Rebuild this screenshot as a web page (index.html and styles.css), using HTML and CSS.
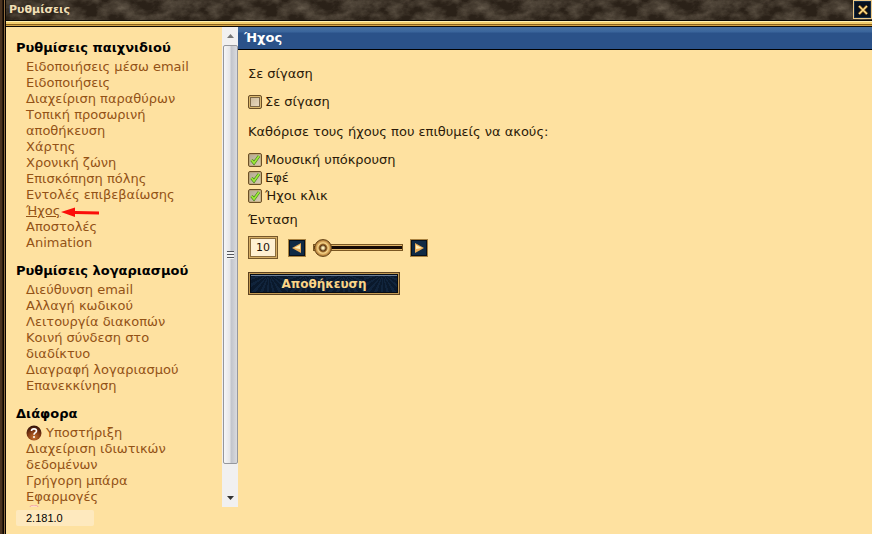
FILE: index.html
```html
<!DOCTYPE html>
<html lang="el">
<head>
<meta charset="utf-8">
<title>Ρυθμίσεις</title>
<link rel="stylesheet" href="styles.css">
</head>
<body>
<div class="window">
  <header class="titlebar">
    <h1>Ρυθμίσεις</h1>
    <button class="close" type="button" aria-label="Κλείσιμο">
      <svg viewBox="0 0 10 10" width="10" height="10"><path d="M1 1 9 9M9 1 1 9" stroke="#7a4a12" stroke-width="3"/><path d="M1 1 9 9M9 1 1 9" stroke="#ffe08a" stroke-width="1.6"/></svg>
    </button>
  </header>
  <div class="content">
    <aside class="sidebar">
      <div class="scroller">
        <nav class="menu">
          <h2>Ρυθμίσεις παιχνιδιού</h2>
          <ul>
            <li><a href="#">Ειδοποιήσεις μέσω email</a></li>
            <li><a href="#">Ειδοποιήσεις</a></li>
            <li><a href="#">Διαχείριση παραθύρων</a></li>
            <li><a href="#">Τοπική προσωρινή αποθήκευση</a></li>
            <li><a href="#">Χάρτης</a></li>
            <li><a href="#">Χρονική ζώνη</a></li>
            <li><a href="#">Επισκόπηση πόλης</a></li>
            <li><a href="#">Εντολές επιβεβαίωσης</a></li>
            <li class="current"><a href="#">Ήχος</a><svg class="pointer" viewBox="0 0 40 12" width="40" height="12"><path d="M1 6 15 1.500V5L39 5.500V8.500L15 8V11Z" fill="#fb0d0a"/></svg></li>
            <li><a href="#">Αποστολές</a></li>
            <li><a href="#">Animation</a></li>
          </ul>
          <h2>Ρυθμίσεις λογαριασμού</h2>
          <ul>
            <li><a href="#">Διεύθυνση email</a></li>
            <li><a href="#">Αλλαγή κωδικού</a></li>
            <li><a href="#">Λειτουργία διακοπών</a></li>
            <li><a href="#">Κοινή σύνδεση στο διαδίκτυο</a></li>
            <li><a href="#">Διαγραφή λογαριασμού</a></li>
            <li><a href="#">Επανεκκίνηση</a></li>
          </ul>
          <h2>Διάφορα</h2>
          <ul>
            <li><a class="with-icon" href="#"><svg viewBox="0 0 16 16" width="16" height="16"><defs><radialGradient id="orb" cx=".5" cy=".8" r=".75"><stop offset="0" stop-color="#c9732f"/><stop offset=".6" stop-color="#7c3613"/><stop offset="1" stop-color="#35130a"/></radialGradient></defs><circle cx="8" cy="8" r="7.500" fill="url(#orb)"/><path d="M5.500 6C5.500 3.200 10.500 3.200 10.500 6 10.500 7.700 8 7.600 8 9.700" fill="none" stroke="#fff" stroke-width="1.600"/><circle cx="8" cy="12" r="1" fill="#fff"/></svg>Υποστήριξη</a></li>
            <li><a href="#">Διαχείριση ιδιωτικών δεδομένων</a></li>
            <li><a href="#">Γρήγορη μπάρα</a></li>
            <li><a href="#">Εφαρμογές</a></li>
            <li><svg viewBox="0 0 16 16" width="16" height="16"><circle cx="8" cy="6" r="6" fill="#ffdcc8" stroke="#f2a3a0"/></svg></li>
          </ul>
        </nav>
        <div class="scrollbar">
          <svg class="up" viewBox="0 0 7 4" width="7" height="4"><path d="M0 4 3.500 0 7 4Z" fill="#777"/></svg>
          <div class="grip"><span></span></div>
          <svg class="down" viewBox="0 0 7 4" width="7" height="4"><path d="M0 0H7L3.500 4Z" fill="#333"/></svg>
        </div>
      </div>
      <div class="version">2.181.0</div>
    </aside>
    <main class="panel">
      <h2>Ήχος</h2>
      <form class="settings">
        <p class="mute-title">Σε σίγαση</p>
        <label class="check"><input type="checkbox">Σε σίγαση</label>
        <p class="hint">Καθόρισε τους ήχους που επιθυμείς να ακούς:</p>
        <label class="check"><input type="checkbox" checked>Μουσική υπόκρουση</label>
        <label class="check"><input type="checkbox" checked>Εφέ</label>
        <label class="check"><input type="checkbox" checked>Ήχοι κλικ</label>
        <label class="volume-label" for="level">Ένταση</label>
        <div class="volume">
          <input class="level" id="level" type="text" value="10">
          <button class="step" type="button" aria-label="Μείωση"><svg viewBox="0 0 10 10" width="10" height="10"><path d="M9 0V10L0 5Z" fill="#e9ab55"/><path d="M8 2V6L2 5Z" fill="#fff0bb"/></svg></button>
          <input class="slider" type="range" min="10" max="100" value="10" aria-label="Ένταση">
          <button class="step" type="button" aria-label="Αύξηση"><svg viewBox="0 0 10 10" width="10" height="10"><path d="M1 0V10L10 5Z" fill="#e9ab55"/><path d="M2 2V6L8 5Z" fill="#fff0bb"/></svg></button>
        </div>
        <button class="save" type="submit">Αποθήκευση</button>
      </form>
    </main>
  </div>
</div>
</body>
</html>
```
FILE: styles.css
```css
* { box-sizing: border-box; }

body {
  margin: 0;
  background: #fee1a0;
  color: #2b1a08;
  font: 13px/16px Verdana, "DejaVu Sans", sans-serif;
}

h1, h2, p, ul { margin: 0; padding: 0; }
ul { list-style: none; }
button { padding: 0; font: inherit; }

.window {
  display: flex;
  flex-direction: column;
  height: 100vh;
  overflow: hidden;
}

.titlebar {
  display: flex;
  justify-content: space-between;
  flex: none;
  height: 27px;
  padding-left: 9px;
  background:
    linear-gradient(90deg, #4a3320 0 2px, #2a1a0e 2px 3px, #080402 3px 4px, #8f6a3c 4px 5px, #080402 5px) 0 0 / 6px 100% no-repeat,
    linear-gradient(#0d0904 0 1px, #fff0b0 1px 2px, #f3cd6c 2px 4px, #8b621b 4px 5px, #d6a64a 5px 6px, #0d0904 6px) 6px 20px / 100% 7px no-repeat,
    url("data:image/svg+xml,%3Csvg xmlns='http://www.w3.org/2000/svg' width='180' height='27'%3E%3Cfilter id='n' x='0' y='0' width='100%25' height='100%25'%3E%3CfeTurbulence type='fractalNoise' baseFrequency='.05 .07' numOctaves='5' stitchTiles='stitch'/%3E%3CfeColorMatrix values='0 0 0 0 .36 0 0 0 0 .3 0 0 0 0 .22 1 0 0 0 -.35'/%3E%3C/filter%3E%3Crect width='180' height='27' filter='url(%23n)'/%3E%3C/svg%3E"),
    #2a2118;
}

.titlebar h1 {
  color: #f0dfb5;
  font-size: 11px;
  line-height: 19px;
}

.close {
  display: grid;
  place-items: center;
  width: 19px;
  height: 19px;
  border: 1px solid #ecc987;
  background: #07101d;
  box-shadow: inset 0 0 0 1px #142b45;
}

.content {
  display: flex;
  flex: 1;
  min-height: 0;
  padding-left: 6px;
  background: linear-gradient(90deg, #4a3320 0 2px, #2a1a0e 2px 3px, #080402 3px 4px, #8f6a3c 4px 5px, #080402 5px) 0 0 / 6px 100% no-repeat;
}

.sidebar {
  display: flex;
  flex-direction: column;
  flex: none;
  width: 232px;
}

.scroller {
  display: flex;
  flex: 1;
  min-height: 0;
  overflow: hidden;
}

.menu {
  flex: 1;
  padding: 13px 20px 0 10px;
  overflow: hidden;
}

.menu h2 {
  margin-bottom: 3px;
  color: #000;
  font-size: 13px;
  line-height: 16px;
}

.menu ul {
  margin-bottom: 12px;
  padding-left: 10px;
}

.menu a {
  color: #935216;
  text-decoration: none;
}

.menu .current { display: flex; }
.menu .current a { text-decoration: underline; }
.pointer { margin-top: 3px; }

.with-icon {
  display: flex;
  gap: 4px;
}

.scrollbar {
  display: flex;
  flex-direction: column;
  align-items: center;
  width: 16px;
  background: #f1f0f0;
}

.up { margin: 7px 0; }
.down { margin: 32px 0 7px; }

.grip {
  display: grid;
  place-items: center;
  flex: 1;
  width: 15px;
  border: 1px solid #96979c;
  border-radius: 2px;
  background: linear-gradient(90deg, #f6f6f7, #e6e6e8 45%, #c2c4cb 55%, #d9dade);
}

.grip span {
  width: 7px;
  height: 8px;
  background: repeating-linear-gradient(#55565c 0 1px, #f4f4f4 1px 3px);
}

.version {
  flex: none;
  width: 78px;
  margin: 3px 0 8px 10px;
  padding-left: 10px;
  background: #fee9be;
  border-radius: 2px;
  color: #000;
  font: 11px/16px "Liberation Sans", sans-serif;
}

.panel {
  flex: 1;
  min-width: 0;
}

.panel h2 {
  padding-left: 6px;
  border-bottom: 1px solid #000;
  background: linear-gradient(#49709f, #3a659c 5px, #2b5289 6px, #2b5289);
  color: #fff;
  font-size: 13px;
  line-height: 22px;
}

.settings {
  display: flex;
  flex-direction: column;
  align-items: flex-start;
  padding: 15px 10px;
  line-height: 18px;
}

.mute-title { margin-bottom: 10px; }
.hint { margin: 12px 0 10px; }

.check {
  display: flex;
  align-items: center;
  gap: 3px;
}

.check input {
  appearance: none;
  width: 14px;
  height: 14px;
  margin: 0;
  border: 1px solid #6b4f26;
  border-radius: 2px;
  background: linear-gradient(135deg, #c8b595, #efdfc5);
  box-shadow: inset 0 0 0 1px #dcb96f, inset 0 0 0 2px #7d6848;
}

.check input:checked {
  background: url("data:image/svg+xml,%3Csvg xmlns='http://www.w3.org/2000/svg' viewBox='0 0 12 12'%3E%3Cpath d='M2.500 6 5 9 10 2' fill='none' stroke='%23447a1c' stroke-width='3'/%3E%3Cpath d='M2.500 6 5 9 10 2' fill='none' stroke='%239cec38' stroke-width='1.800'/%3E%3C/svg%3E") center / 12px no-repeat, linear-gradient(135deg, #b3a88f, #d9cdb4);
  box-shadow: inset 0 0 0 1px #b3934f66;
}

.volume-label { margin-top: 6px; }

.volume {
  display: flex;
  align-items: center;
  margin: 7px 0 13px;
}

.level {
  width: 30px;
  height: 23px;
  margin-right: 10px;
  padding: 0;
  border: 1px solid #76572a;
  background: #fff0d2;
  box-shadow: inset 0 0 0 1px #d6ae66, inset 0 0 0 2px #8c6d3d;
  color: #1e1208;
  font: 11px Verdana, "DejaVu Sans", sans-serif;
  text-align: center;
}

.step {
  display: grid;
  place-items: center;
  width: 18px;
  height: 18px;
  border: 1px solid #a8813f;
  background: #102a45;
  box-shadow: inset 0 0 0 1px #07101b;
}

.slider {
  appearance: none;
  width: 90px;
  height: 20px;
  margin: 0 7px;
  background:
    linear-gradient(#7a5824, #7a5824) left / 1px 7px no-repeat,
    linear-gradient(#7a5824, #7a5824) right / 1px 7px no-repeat,
    linear-gradient(#7a5824 0 1px, #e2b66a 1px 2px, #160a04 2px 5px, #e2b66a 5px 6px, #7a5824 6px) center / 100% 7px no-repeat;
}

.slider::-webkit-slider-thumb {
  appearance: none;
  width: 18px;
  height: 18px;
  margin-left: 1px;
  border: 1px solid #6b4819;
  border-radius: 50%;
  background: radial-gradient(circle at 50% 50%, #fff0bb 0 1px, #5a3510 3px, #a87430 4px, #f7d78c 5px, #c9944a 7px, #7d5420 9px);
}

.save {
  width: 152px;
  height: 23px;
  border: 2px solid #c39a52;
  outline: 1px solid #5d4220;
  outline-offset: -1px;
  background:
    repeating-conic-gradient(from 0deg at 50% 0, #24446a44 0 8deg, transparent 8deg 18deg) 0 0 / 38px 100%,
    #0a192c;
  box-shadow: inset 0 0 0 1px #050b14, inset 0 2px #6d7f96;
  color: #fbd486;
  font-size: 12px;
  font-weight: bold;
  line-height: 18px;
}
```
